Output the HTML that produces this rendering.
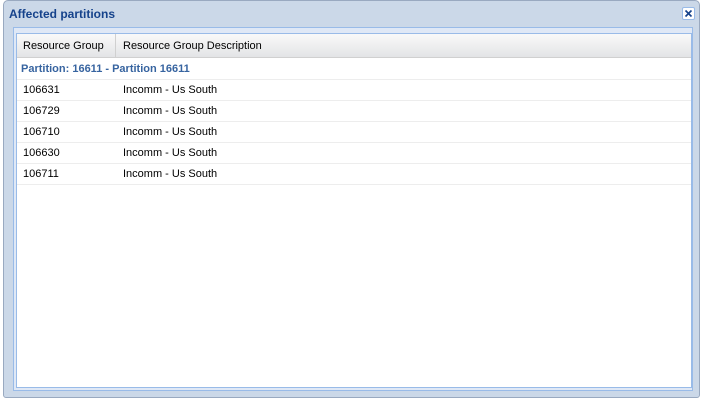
<!DOCTYPE html><html><head><style>
body{margin:0;width:704px;height:401px;background:#fff;position:relative;overflow:hidden;font-family:"Liberation Sans",Arial,sans-serif;font-size:11px}
.win{position:absolute;left:3px;top:0;width:697px;height:398px;background:#cbd8e8;border:1px solid #99a9c0;border-radius:5px 5px 3px 3px;box-sizing:border-box}
.title{position:absolute;left:5px;top:6px;font-weight:bold;font-size:12px;color:#15428b}
.close{position:absolute;left:678px;top:6px;width:13px;height:13px;background:#fff;border:1px solid #99bbe8;border-radius:2px;box-sizing:border-box}
.body{position:absolute;left:9px;top:26px;width:680px;height:364px;border:1px solid #99bbe8;background:#dfe8f6;box-sizing:border-box}
.grid{position:absolute;left:2px;top:5px;width:676px;height:355px;background:#fff;border:1px solid #99bbe8;box-sizing:border-box}
.hd{height:23px;background:linear-gradient(#f9f9f9,#e3e4e6);border-bottom:1px solid #d0d0d0;position:relative}
.hd div{position:absolute;top:6px;color:#000}
.sep{position:absolute;left:98px;top:0;width:1px;height:23px;background:#d0d0d0}
.grp{height:21px;line-height:22px;padding-left:4px;color:#3764a0;font-weight:bold;border-bottom:1px solid #ededed}
.row{height:20px;line-height:20px;border-bottom:1px solid #ededed;position:relative}
.row span{position:absolute;left:6px}.row span+span{left:106px}
</style></head><body>
<div class="win">
<div class="title">Affected partitions</div>
<div class="close"><svg width="11" height="11" style="position:absolute;left:0;top:0"><path d="M2.5 2.5L8.5 8.5M8.5 2.5L2.5 8.5" stroke="#15428b" stroke-width="1.6"/></svg></div>
<div class="body"><div class="grid">
<div class="hd"><div style="left:6px">Resource Group</div><span class="sep"></span><div style="left:106px">Resource Group Description</div></div>
<div class="grp">Partition: 16611 - Partition 16611</div>
<div class="row"><span>106631</span><span>Incomm - Us South</span></div>
<div class="row"><span>106729</span><span>Incomm - Us South</span></div>
<div class="row"><span>106710</span><span>Incomm - Us South</span></div>
<div class="row"><span>106630</span><span>Incomm - Us South</span></div>
<div class="row"><span>106711</span><span>Incomm - Us South</span></div>
</div></div></div>
</body></html>
